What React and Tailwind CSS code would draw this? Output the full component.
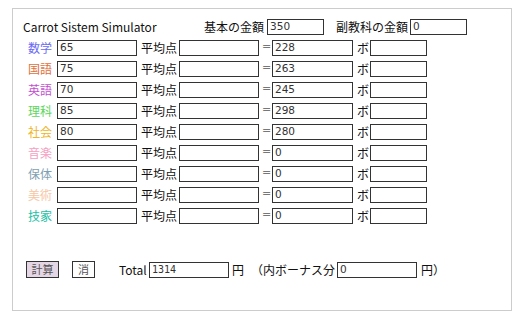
import React from "react";

const subjects = [
  { name: "数学", color: "text-[#6a6af5]", v: "65", t: "228" },
  { name: "国語", color: "text-[#e0703c]", v: "75", t: "263" },
  { name: "英語", color: "text-[#c24fd0]", v: "70", t: "245" },
  { name: "理科", color: "text-[#5ed65e]", v: "85", t: "298" },
  { name: "社会", color: "text-[#f0b424]", v: "80", t: "280" },
  { name: "音楽", color: "text-[#f5a0c2]", v: "", t: "0" },
  { name: "保体", color: "text-[#7fa0b4]", v: "", t: "0" },
  { name: "美術", color: "text-[#f7c6a4]", v: "", t: "0" },
  { name: "技家", color: "text-[#1cc0a4]", v: "", t: "0" },
];

const jp = { fontFamily: '"Noto Sans CJK JP", "Noto Sans", sans-serif' };
const num = { fontFamily: '"DejaVu Sans", sans-serif' };

function Box({ w, value, mono }) {
  return (
    <div
      className={`${w} h-[16px] border border-[#333] bg-white flex items-center pl-[2px] text-[10.5px] text-[#333] leading-none`}
      style={mono ? { fontFamily: '"DejaVu Sans Mono", monospace', fontSize: "10px" } : num}
    >
      {value}
    </div>
  );
}

export default function App() {
  return (
    <div className="w-[519px] h-[317px] bg-white pt-[8px] pl-[12px]" style={jp}>
      <div className="w-[500px] h-[303px] border border-[#ccc] pt-[7px] text-[12px] text-[#111]">
        <div className="h-[21px] flex items-center">
          <span className="ml-[10px] w-[133px] text-[12px] whitespace-nowrap">Carrot Sistem Simulator</span>
          <span className="ml-[48px]">基本の金額</span>
          <div className="ml-[3px]"><Box w="w-[57px]" value="350" /></div>
          <span className="ml-[12px]">副教科の金額</span>
          <div className="ml-[2px]"><Box w="w-[57px]" value="0" /></div>
        </div>
        {subjects.map((s) => (
          <div key={s.name} className="h-[21px] flex items-center">
            <span className={`ml-[15px] w-[24px] ${s.color}`}>{s.name}</span>
            <div className="ml-[5px]"><Box w="w-[80px]" value={s.v} /></div>
            <span className="ml-[4px] w-[36px]">平均点</span>
            <div className="ml-[2px]"><Box w="w-[80px]" value="" /></div>
            <span className="ml-[3px] w-[7px] text-[#777] text-[11px]" style={num}>=</span>
            <div className="ml-[3px]"><Box w="w-[81px]" value={s.t} /></div>
            <span className="ml-[4px] w-[12px]">ボ</span>
            <div className="ml-[1px]"><Box w="w-[57px]" value="" /></div>
          </div>
        ))}
        <div className="h-[21px] mt-[33px] flex items-center">
          <div className="ml-[13px] h-[17px] w-[33px] border border-[#333] bg-[#e4d6e4] flex items-center justify-center text-[11px] text-[#555]">計算</div>
          <div className="ml-[13px] h-[17px] w-[23px] border border-[#333] bg-white flex items-center justify-center text-[11px] text-[#555]">消</div>
          <span className="ml-[24px] w-[28px] text-[12px] whitespace-nowrap">Total</span>
          <div className="ml-[2px]"><Box w="w-[80px]" value="1314" mono /></div>
          <span className="ml-[3px]">円</span>
          <span className="ml-[7px] w-[84px] whitespace-nowrap">（内ボーナス分</span>
          <div className="ml-[2px]"><Box w="w-[80px]" value="0" /></div>
          <span className="ml-[4px]">円）</span>
        </div>
      </div>
    </div>
  );
}
